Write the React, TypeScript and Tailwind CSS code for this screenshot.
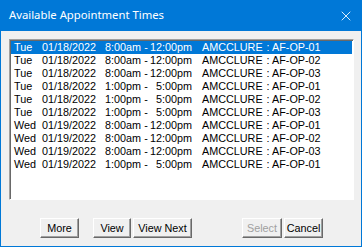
import { X } from "lucide-react";

type Slot = { day: string; date: string; start: string; end: string; who: string; op: string };

const slots: Slot[] = [
  { day: "Tue", date: "01/18/2022", start: "8:00am", end: "12:00pm", who: "AMCCLURE", op: "AF-OP-01" },
  { day: "Tue", date: "01/18/2022", start: "8:00am", end: "12:00pm", who: "AMCCLURE", op: "AF-OP-02" },
  { day: "Tue", date: "01/18/2022", start: "8:00am", end: "12:00pm", who: "AMCCLURE", op: "AF-OP-03" },
  { day: "Tue", date: "01/18/2022", start: "1:00pm", end: "5:00pm", who: "AMCCLURE", op: "AF-OP-01" },
  { day: "Tue", date: "01/18/2022", start: "1:00pm", end: "5:00pm", who: "AMCCLURE", op: "AF-OP-02" },
  { day: "Tue", date: "01/18/2022", start: "1:00pm", end: "5:00pm", who: "AMCCLURE", op: "AF-OP-03" },
  { day: "Wed", date: "01/19/2022", start: "8:00am", end: "12:00pm", who: "AMCCLURE", op: "AF-OP-01" },
  { day: "Wed", date: "01/19/2022", start: "8:00am", end: "12:00pm", who: "AMCCLURE", op: "AF-OP-02" },
  { day: "Wed", date: "01/19/2022", start: "8:00am", end: "12:00pm", who: "AMCCLURE", op: "AF-OP-03" },
  { day: "Wed", date: "01/19/2022", start: "1:00pm", end: "5:00pm", who: "AMCCLURE", op: "AF-OP-01" },
];

const Button = ({ label, disabled, className }: { label: string; disabled?: boolean; className: string }) => (
  <div
    className={`h-[20px] flex items-center justify-center bg-[#f0f0f0] border border-t-white border-l-white border-r-[#696969] border-b-[#696969] shadow-[inset_-1px_-1px_0_#a0a0a0] ${className} ${
      disabled ? "text-[#a0a0a0]" : "text-black"
    }`}
  >
    {label}
  </div>
);

const App = () => {
  return (
    <div className="w-[362px] h-[247px] flex flex-col bg-[#f0f0f0] border-x border-b border-[#0078d7] font-['Liberation_Sans',Arial,sans-serif] text-[10.8px] overflow-hidden">
      <div className="h-[31px] -mx-px bg-[#0078d7] flex items-center justify-between pl-[9px] pr-[8px] text-white">
        <span className="text-[11.3px] font-['Noto_Sans',sans-serif]">Available Appointment Times</span>
        <X size={16} strokeWidth={1.3} />
      </div>
      <div className="pl-[8px] pr-[7px] pt-[8px]">
        <div className="h-[161px] bg-white border border-t-[#a0a0a0] border-l-[#a0a0a0] border-r-white border-b-white shadow-[inset_1px_1px_0_#696969] p-[1px]">
          {slots.map((s, i) => (
            <div
              key={i}
              className={`h-[13px] flex items-center leading-none pl-[3px] whitespace-pre ${
                i === 0 ? "bg-[#0078d7] text-white" : "text-black"
              }`}
            >
              <span className="w-[28px]">{s.day}</span>
              <span className="w-[63px]">{s.date}</span>
              <span className="w-[38px]">{s.start}</span>
              <span className="w-[6px] text-center">-</span>
              <span className="w-[43px] text-right">{s.end}</span>
              <span className="ml-[10px]">{s.who}</span>
              <span className="ml-[4px]">: {s.op}</span>
            </div>
          ))}
        </div>
      </div>
      <div className="flex items-center mt-[18px] pl-[39px]">
        <Button label="More" className="w-[39px]" />
        <Button label="View" className="w-[38px] ml-[14px]" />
        <Button label="View Next" className="w-[59px] ml-[2px]" />
        <Button label="Select" disabled className="w-[40px] ml-[50px]" />
        <Button label="Cancel" className="w-[39px] ml-[2px]" />
      </div>
    </div>
  );
};

export default App;
